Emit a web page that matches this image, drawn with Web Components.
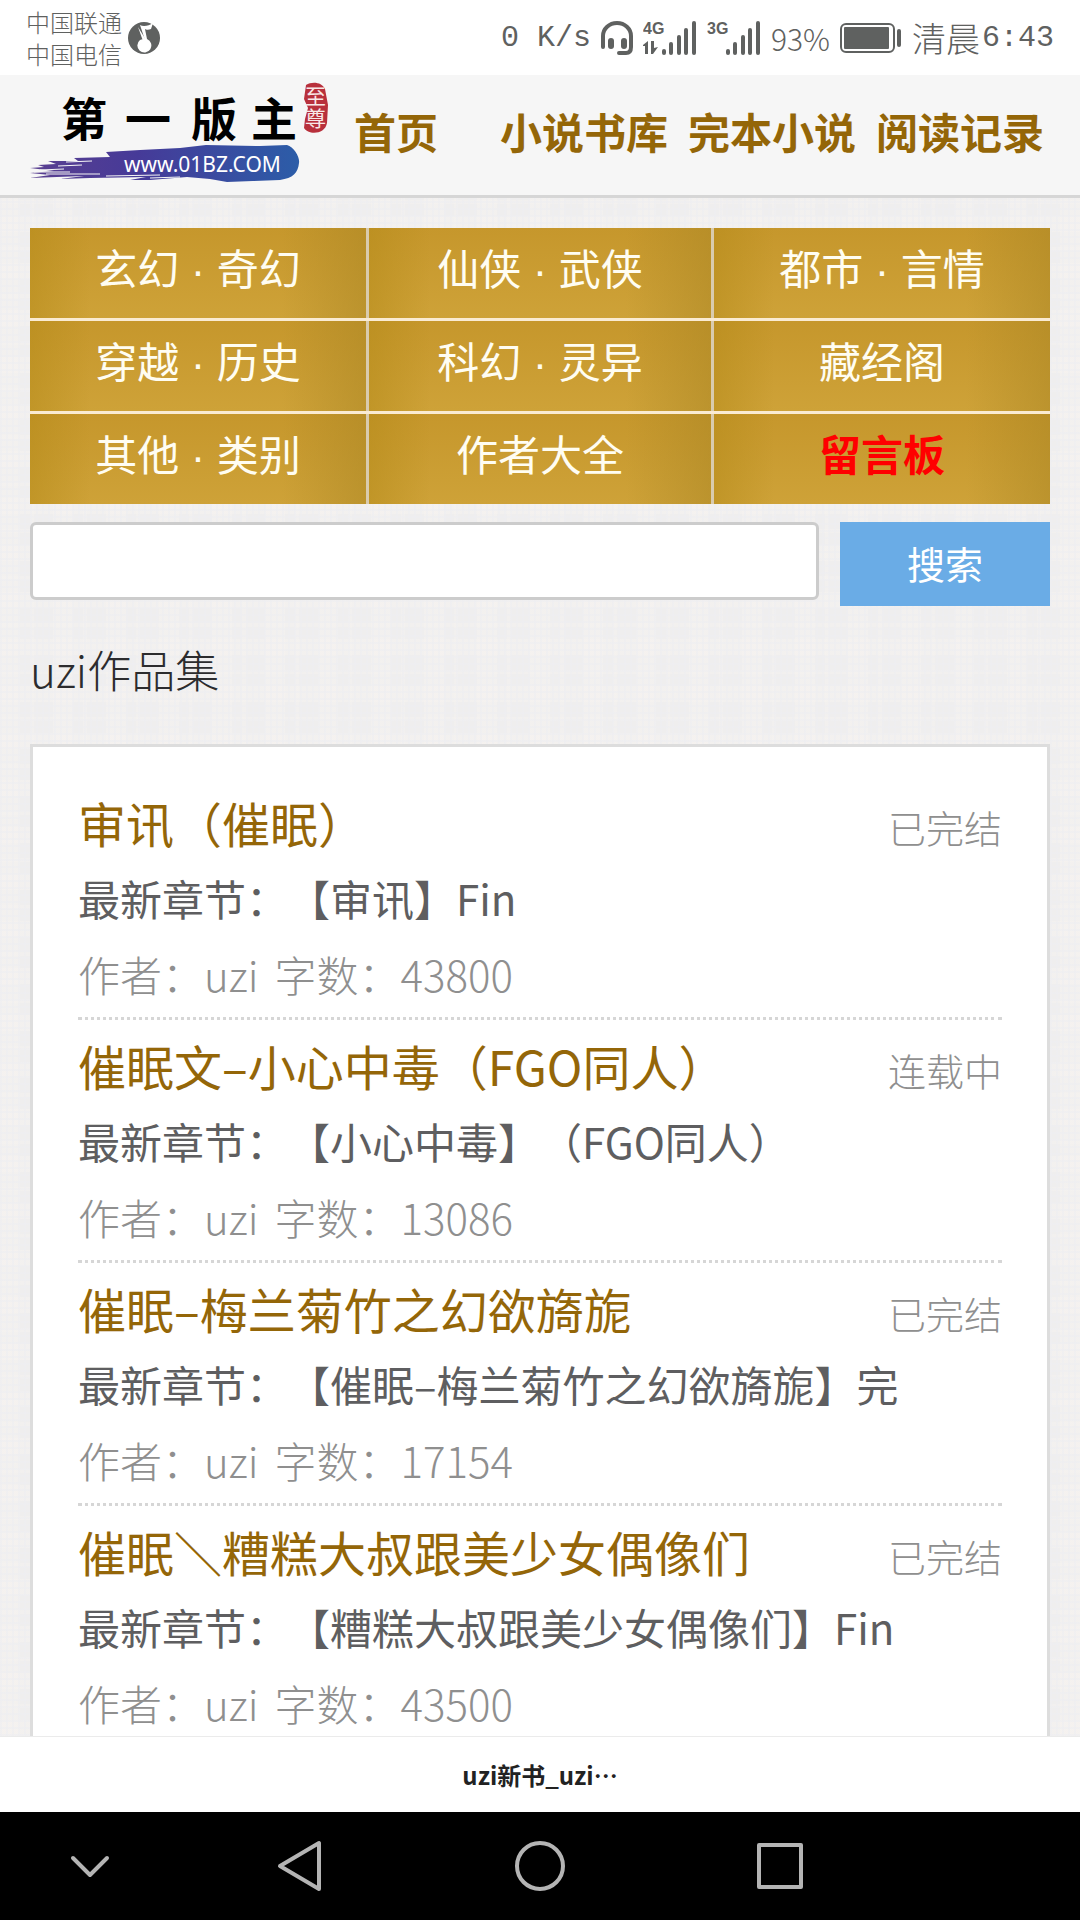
<!DOCTYPE html>
<html lang="zh-CN">
<head>
<meta charset="utf-8">
<meta name="viewport" content="width=device-width, initial-scale=1">
<title>uzi新书_uzi作品集</title>
<style>
    body {
        margin: 0;
        font-family: "Noto Sans CJK SC", sans-serif;
        text-spacing-trim: space-all;
        --gold: #946608;
        --line: #dddddd;
    }
</style>
</head>
<body>
<phone-screen>
    <status-bar slot="top"></status-bar>
    <site-header></site-header>
    <category-grid></category-grid>
    <search-bar></search-bar>
    <book-list heading="uzi作品集">
        <book-item status="已完结" author="uzi" words="43800">
            审讯（催眠）
            <span slot="chapter">【审讯】Fin</span>
        </book-item>
        <book-item status="连载中" author="uzi" words="13086">
            催眠文–小心中毒（FGO同人）
            <span slot="chapter">【小心中毒】（FGO同人）</span>
        </book-item>
        <book-item status="已完结" author="uzi" words="17154">
            催眠–梅兰菊竹之幻欲旖旎
            <span slot="chapter">【催眠–梅兰菊竹之幻欲旖旎】完</span>
        </book-item>
        <book-item status="已完结" author="uzi" words="43500">
            催眠＼糟糕大叔跟美少女偶像们
            <span slot="chapter">【糟糕大叔跟美少女偶像们】Fin</span>
        </book-item>
    </book-list>
    <title-bar slot="bottom">uzi新书_uzi⋯</title-bar>
    <system-nav slot="bottom"></system-nav>
</phone-screen>

<script>
class PhoneScreen extends HTMLElement {
    constructor() {
        super();
        this.attachShadow({ mode: 'open' });
        this.shadowRoot.innerHTML = `
            <style>
                :host {
                    display: flex;
                    flex-direction: column;
                    height: 100vh;
                    overflow: hidden;
                }
                /* woven paper texture */
                main {
                    flex: 1;
                    min-height: 0;
                    overflow: hidden;
                    background-color: #efeeee;
                    background-image:
                        repeating-linear-gradient(90deg, rgba(238, 238, 241, 0.6) 0 2px, transparent 2px 6px),
                        repeating-linear-gradient(0deg, rgba(238, 238, 241, 0.6) 0 2px, transparent 2px 7px),
                        repeating-linear-gradient(90deg, rgba(246, 243, 240, 0.5) 0 20px, transparent 20px 30px, rgba(246, 243, 240, 0.4) 30px 34px, transparent 34px 53px),
                        repeating-linear-gradient(0deg, rgba(246, 243, 240, 0.5) 0 16px, transparent 16px 28px, rgba(246, 243, 240, 0.4) 28px 32px, transparent 32px 47px);
                }
            </style>
            <slot name="top"></slot>
            <main><slot></slot></main>
            <slot name="bottom"></slot>
        `;
    }
}

class StatusBar extends HTMLElement {
    constructor() {
        super();
        this.attachShadow({ mode: 'open' });
        this.shadowRoot.innerHTML = `
            <style>
                :host {
                    display: flex;
                    justify-content: space-between;
                    align-items: center;
                    height: 75px;
                    padding: 0 26px;
                    background: #fff;
                    color: #5f6160;
                }
                div {
                    display: flex;
                    align-items: center;
                }
                .carriers {
                    gap: 6px;
                    font-size: 24px;
                    font-weight: 300;
                    line-height: 32px;
                }
                .state {
                    gap: 10px;
                    font-size: 34px;
                    font-weight: 300;
                }
                .mono {
                    font-family: "Liberation Mono", monospace;
                    font-size: 30px;
                }
                .charge {
                    font-size: 30px;
                }
                .clock {
                    gap: 2px;
                }
                svg {
                    display: block;
                    fill: #5f6160;
                }
                text {
                    font: bold 16px "Liberation Sans", sans-serif;
                }
            </style>
            <div class="carriers">
                <span>中国联通<br>中国电信</span>
                <svg width="32" height="32" viewBox="0 0 32 32">
                    <circle cx="16" cy="16" r="16"/>
                    <path d="M12 3C15 5 21 4 25 1L23 7C21 8 18 8 17 7L19 17A7 7 0 1 1 12 18C14 17 16 17 17 18Z" fill="#fff"/>
                    <path d="M10 5 18 18 15 19Z" fill="#fff"/>
                </svg>
            </div>
            <div class="state">
                <span class="mono">0 K/s</span>
                <svg width="32" height="34" viewBox="0 0 32 34">
                    <path d="M2 26V15a14 13 0 0 1 28 0v11c0 4-2 6-5 6h-7" fill="none" stroke="#5f6160" stroke-width="4" stroke-linecap="round"/>
                    <rect x="7" y="17" width="6" height="11" rx="3"/>
                    <rect x="20" y="17" width="6" height="11" rx="3"/>
                </svg>
                <svg width="54" height="36" viewBox="0 0 54 36">
                    <text x="0" y="14">4G</text>
                    <path d="M0 25 5 21V34H2V26H0ZM8 21h3v7l4-1-5 7H8Z"/>
                    <rect x="19" y="29" width="4" height="6" rx="2"/>
                    <rect x="26" y="22" width="4" height="13" rx="2"/>
                    <rect x="34" y="15" width="4" height="20" rx="2"/>
                    <rect x="41" y="8" width="4" height="27" rx="2"/>
                    <rect x="49" y="1" width="4" height="34" rx="2"/>
                </svg>
                <svg width="54" height="36" viewBox="0 0 54 36">
                    <text x="0" y="14">3G</text>
                    <rect x="19" y="29" width="4" height="6" rx="2"/>
                    <rect x="26" y="22" width="4" height="13" rx="2"/>
                    <rect x="34" y="15" width="4" height="20" rx="2"/>
                    <rect x="41" y="8" width="4" height="27" rx="2"/>
                    <rect x="49" y="1" width="4" height="34" rx="2"/>
                </svg>
                <span class="charge">93%</span>
                <svg width="62" height="30" viewBox="0 0 62 30">
                    <rect x="1" y="1" width="53" height="28" rx="5" fill="none" stroke="#5f6160" stroke-width="2"/>
                    <rect x="4" y="4" width="45" height="22" rx="1"/>
                    <rect x="57" y="6" width="4" height="18" rx="2"/>
                </svg>
                <div class="clock"><span>清晨</span><span class="mono">6:43</span></div>
            </div>
        `;
    }
}

class SiteHeader extends HTMLElement {
    constructor() {
        super();
        this.attachShadow({ mode: 'open' });
        this.shadowRoot.innerHTML = `
            <style>
                :host {
                    display: flex;
                    align-items: center;
                    height: 120px;
                    padding: 0 26px 0 30px;
                    background: #f6f6f6;
                    border-bottom: 3px solid #d6d6d6;
                }
                svg {
                    display: block;
                    overflow: visible;
                }
                .name {
                    font: bold 46px "Noto Sans CJK SC", sans-serif;
                }
                .url {
                    font: 21px "Noto Sans", sans-serif;
                    fill: #fff;
                }
                .seal {
                    font: 21px "Noto Sans CJK SC", sans-serif;
                    fill: #f8e8e8;
                }
                nav {
                    flex: 1;
                    display: grid;
                    grid-template-columns: repeat(4, 1fr);
                    padding-bottom: 8px;
                }
                nav a {
                    font-size: 42px;
                    font-weight: bold;
                    line-height: 60px;
                    text-align: center;
                    white-space: nowrap;
                    text-decoration: none;
                    color: var(--gold);
                }
            </style>
            <a href="#" aria-label="第一版主">
                <svg width="272" height="108" viewBox="0 0 272 108">
                    <defs>
                        <linearGradient id="ink">
                            <stop offset="0" stop-color="#5a3f90"/>
                            <stop offset="0.4" stop-color="#463a98"/>
                            <stop offset="1" stop-color="#2c5da8"/>
                        </linearGradient>
                    </defs>
                    <path fill="url(#ink)" d="M0 87 14 86 8 84 26 83 18 80 48 80 44 77 80 76 76 71 110 69 150 67 176 64 230 65 257 64C264 66 270 76 269 82C268 92 263 97 250 99L223 100 197 101 180 98 157 96 120 99 100 99 116 96 60 97 30 98 54 95 0 97 20 94 0 92 24 90Z"/>
                    <path stroke="#f6f6f6" stroke-width="1" fill="none" d="M10 89 34 88M28 85 52 84M16 93 70 93M76 95 130 94M4 91 40 91M120 97 150 96M36 81 62 80"/>
                    <text class="name" x="31 95 161 221" y="55">第一版主</text>
                    <text class="url" x="94" y="91">www.01BZ.COM</text>
                    <path fill="#b8303c" d="M276 4C282 0 292 1 295 8 L298 24 297 42C295 54 278 54 274 47L275 38 278 27 274 18Z"/>
                    <text class="seal" x="275 275" y="23 45">至尊</text>
                </svg>
            </a>
            <nav>
                <a href="#">首页</a>
                <a href="#">小说书库</a>
                <a href="#">完本小说</a>
                <a href="#">阅读记录</a>
            </nav>
        `;
    }
}

class CategoryGrid extends HTMLElement {
    constructor() {
        super();
        this.attachShadow({ mode: 'open' });
        this.shadowRoot.innerHTML = `
            <style>
                :host {
                    display: block;
                    margin: 30px 30px 18px;
                    font-family: "Liberation Sans", "Noto Sans CJK SC", sans-serif;
                }
                nav {
                    display: grid;
                    gap: 3px;
                    background: #faebd2;
                }
                .row {
                    display: grid;
                    grid-template-columns: 56fr 57fr 56fr;
                    column-gap: 3px;
                    background: #d9cbae;
                }
                a {
                    padding-bottom: 4px;
                    font-size: 42px;
                    line-height: 86px;
                    text-align: center;
                    white-space: nowrap;
                    text-decoration: none;
                    color: #fffdf2;
                    background:
                        linear-gradient(90deg, rgba(180, 138, 24, 0.5), transparent 18% 75%, rgba(170, 134, 36, 0.5)),
                        linear-gradient(#c6972c, #cea238);
                }
                .hot {
                    color: #ff0000;
                    font-weight: bold;
                }
            </style>
            <nav></nav>
        `;
    }

    connectedCallback() {
        const rows = [
            ['玄幻 · 奇幻', '仙侠 · 武侠', '都市 · 言情'],
            ['穿越 · 历史', '科幻 · 灵异', '藏经阁'],
            ['其他 · 类别', '作者大全', '留言板'],
        ];
        this.shadowRoot.querySelector('nav').innerHTML = rows.map(row => `
            <div class="row">
                ${row.map(name => `<a href="#"${name === '留言板' ? ' class="hot"' : ''}>${name}</a>`).join('')}
            </div>
        `).join('');
    }
}

class SearchBar extends HTMLElement {
    constructor() {
        super();
        this.attachShadow({ mode: 'open' });
        this.shadowRoot.innerHTML = `
            <style>
                :host {
                    display: block;
                    margin: 0 30px;
                }
                form {
                    display: flex;
                    align-items: flex-start;
                    gap: 21px;
                }
                input {
                    flex: 1;
                    min-width: 0;
                    box-sizing: border-box;
                    height: 78px;
                    padding: 0 18px;
                    border: 3px solid #cccccc;
                    border-radius: 6px;
                    background: #fff;
                    font: inherit;
                    font-size: 38px;
                }
                button {
                    width: 210px;
                    height: 84px;
                    padding: 0 0 4px;
                    border: 0;
                    background: #6aace6;
                    color: #fff;
                    font: inherit;
                    font-size: 38px;
                }
            </style>
            <form>
                <input type="text" aria-label="搜索">
                <button type="button">搜索</button>
            </form>
        `;
    }
}

class BookList extends HTMLElement {
    constructor() {
        super();
        this.attachShadow({ mode: 'open' });
        this.shadowRoot.innerHTML = `
            <style>
                :host {
                    display: block;
                    margin: 0 30px;
                }
                h1 {
                    margin: 33px 0 45px;
                    font-size: 44px;
                    font-weight: 300;
                    line-height: 60px;
                    color: #2c2c2e;
                }
                section {
                    padding: 30px 45px;
                    background: #fff;
                    border: 3px solid var(--line);
                }
            </style>
            <h1></h1>
            <section><slot></slot></section>
        `;
    }

    connectedCallback() {
        this.shadowRoot.querySelector('h1').textContent = this.getAttribute('heading');
    }
}

class BookItem extends HTMLElement {
    constructor() {
        super();
        this.attachShadow({ mode: 'open' });
        this.shadowRoot.innerHTML = `
            <style>
                :host {
                    display: block;
                    padding: 7px 0 5px;
                    border-bottom: 3px dotted #d6d6d6;
                    font-size: 42px;
                    line-height: 76px;
                    white-space: nowrap;
                }
                .top {
                    display: flex;
                    justify-content: space-between;
                    align-items: baseline;
                }
                h2 {
                    margin: 0;
                    font-size: 48px;
                    font-weight: 400;
                }
                a {
                    color: var(--gold);
                    text-decoration: none;
                }
                .status {
                    font-size: 38px;
                    font-weight: 300;
                    line-height: 60px;
                    color: #8f8f8f;
                }
                p {
                    margin: 0;
                    color: #5e5e60;
                }
                .meta {
                    display: flex;
                    gap: 16px;
                    font-weight: 300;
                    color: #8f8f8f;
                }
            </style>
            <div class="top">
                <h2><a href="#"><slot></slot></a></h2>
                <span class="status"></span>
            </div>
            <p>最新章节：<slot name="chapter"></slot></p>
            <p class="meta"><span class="author"></span><span class="words"></span></p>
        `;
    }

    connectedCallback() {
        this.shadowRoot.querySelector('.status').textContent = this.getAttribute('status');
        this.shadowRoot.querySelector('.author').textContent = `作者：${this.getAttribute('author')}`;
        this.shadowRoot.querySelector('.words').textContent = `字数：${this.getAttribute('words')}`;
    }
}

class TitleBar extends HTMLElement {
    constructor() {
        super();
        this.attachShadow({ mode: 'open' });
        this.shadowRoot.innerHTML = `
            <style>
                :host {
                    display: block;
                    border-top: 1px solid #ebebeb;
                    background: #fff;
                    color: #222;
                    font-size: 24px;
                    font-weight: bold;
                    line-height: 75px;
                    text-align: center;
                }
            </style>
            <slot></slot>
        `;
    }
}

class SystemNav extends HTMLElement {
    constructor() {
        super();
        this.attachShadow({ mode: 'open' });
        this.shadowRoot.innerHTML = `
            <style>
                :host {
                    display: grid;
                    grid-template-columns: 3fr 4fr 4fr 4fr 3fr;
                    height: 108px;
                    background: #000;
                }
                button {
                    display: grid;
                    place-items: center;
                    padding: 0;
                    border: 0;
                    background: none;
                }
                svg {
                    fill: none;
                    stroke: #b4b4b4;
                    stroke-width: 4;
                    stroke-linecap: round;
                    stroke-linejoin: round;
                }
            </style>
            <button type="button" aria-label="隐藏">
                <svg width="52" height="52" viewBox="0 0 52 52"><path d="M9 18 26 35 43 18"/></svg>
            </button>
            <button type="button" aria-label="返回">
                <svg width="52" height="52" viewBox="0 0 52 52"><path d="M45 3V49L6 26Z"/></svg>
            </button>
            <button type="button" aria-label="主屏幕">
                <svg width="52" height="52" viewBox="0 0 52 52"><circle cx="26" cy="26" r="23"/></svg>
            </button>
            <button type="button" aria-label="最近任务">
                <svg width="52" height="52" viewBox="0 0 52 52"><rect x="5" y="5" width="42" height="42"/></svg>
            </button>
        `;
    }
}

customElements.define('phone-screen', PhoneScreen);
customElements.define('status-bar', StatusBar);
customElements.define('site-header', SiteHeader);
customElements.define('category-grid', CategoryGrid);
customElements.define('search-bar', SearchBar);
customElements.define('book-list', BookList);
customElements.define('book-item', BookItem);
customElements.define('title-bar', TitleBar);
customElements.define('system-nav', SystemNav);
</script>
</body>
</html>
